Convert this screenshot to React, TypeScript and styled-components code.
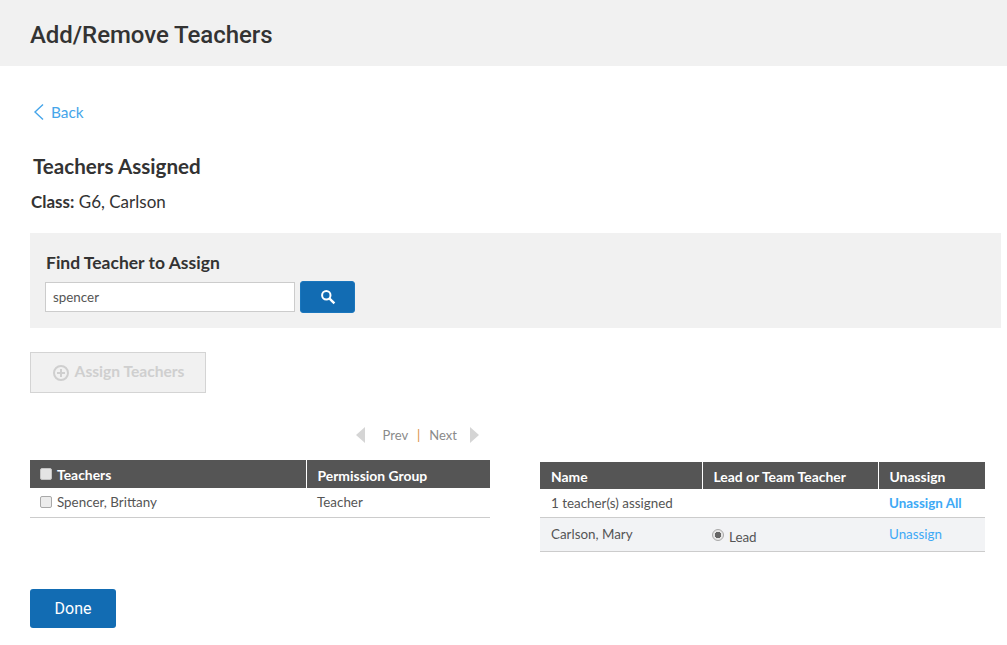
import styled, { createGlobalStyle } from 'styled-components'

const GlobalStyle = createGlobalStyle`
  html, body {
    margin: 0;
    padding: 0;
    background: #fff;
    font-family: "Lato", "Open Sans", Arial, sans-serif;
    color: #333;
  }
`

const PageHeader = styled.header`
  height: 66px;
  background: #f1f1f1;
  padding: 4px 0 0 30px;
  box-sizing: border-box;
  display: flex;
  align-items: center;
`

const PageTitle = styled.h1`
  margin: 0;
  font-family: "Roboto", Arial, sans-serif;
  font-weight: 500;
  font-size: 24px;
  letter-spacing: -0.05px;
  color: #333;
`

const Main = styled.main`
  padding: 34px 6px 0 30px;
`

const BackLink = styled.a`
  display: flex;
  align-items: center;
  gap: 6px;
  height: 24px;
  padding-left: 3px;
  font-size: 15.4px;
  color: #45a5ea;
`

const SectionTitle = styled.h2`
  margin: 29px 0 0 3px;
  font-size: 20.6px;
  line-height: 26px;
  font-weight: 700;
  color: #333;
`

const ClassLine = styled.p`
  margin: 12px 0 0 1px;
  font-size: 17px;
  line-height: 22px;
  color: #333;

  b {
    font-weight: 700;
  }
`

const SearchPanel = styled.section`
  margin-top: 20px;
  height: 95px;
  box-sizing: border-box;
  padding: 19px 16px 0 15px;
  background: #f1f1f1;
`

const SearchLabel = styled.div`
  font-size: 17.5px;
  line-height: 22px;
  font-weight: 700;
  padding-left: 1px;
  color: #333;
`

const SearchRow = styled.div`
  display: flex;
  align-items: center;
  gap: 5px;
  margin-top: 7px;
`

const SearchInput = styled.input`
  width: 250px;
  height: 30px;
  box-sizing: border-box;
  padding: 0 7px;
  border: 1px solid #ccc;
  background: #fff;
  font-family: inherit;
  font-size: 13.4px;
  color: #555;
  outline: none;
`

const SearchButton = styled.button`
  width: 55px;
  height: 32px;
  padding: 0;
  display: flex;
  align-items: center;
  justify-content: center;
  background: #126cb3;
  border: 1px solid #1a76bd;
  border-radius: 3px;
`

const AssignButton = styled.button`
  margin-top: 24px;
  width: 176px;
  height: 41px;
  display: flex;
  align-items: center;
  justify-content: center;
  gap: 6px;
  padding: 0 0 3px 1px;
  background: #f1f1f1;
  border: 1px solid #d4d4d4;
  font-family: inherit;
  font-size: 15.6px;
  font-weight: 700;
  color: #cfcfcf;
`

const PlusIcon = styled.svg`
  margin-top: 3px;
`

const Columns = styled.div`
  display: flex;
  margin-top: 32px;
  gap: 50px;
`

const LeftColumn = styled.div`
  width: 460px;
`

const RightColumn = styled.div`
  width: 445px;
  margin-top: 37px;
`

const Pager = styled.nav`
  height: 20px;
  display: flex;
  align-items: center;
  justify-content: flex-end;
  padding-right: 11px;
  margin-bottom: 15px;
  font-size: 13px;
  color: #8a8a8a;
`

const PagerPrev = styled.span`
  margin: 0 9px 0 18px;
`

const PagerNext = styled.span`
  margin: 0 13px 0 9px;
`

const PagerDivider = styled.span`
  color: #d98e3f;
`

const Arrow = styled.span<{ $dir: 'left' | 'right' }>`
  width: 0;
  height: 0;
  border-top: 8px solid transparent;
  border-bottom: 8px solid transparent;
  ${p => (p.$dir === 'left' ? 'border-right: 9px solid #d5d5d5;' : 'border-left: 9px solid #d5d5d5;')}
`

const Table = styled.table`
  width: 100%;
  table-layout: fixed;
  border-collapse: collapse;
  font-size: 13.4px;
  color: #555;
`

const HeadCell = styled.th<{ $width: number; $height: number }>`
  width: ${p => p.$width}px;
  height: ${p => p.$height}px;
  box-sizing: border-box;
  padding: 2px 0 0 11px;
  background: #555;
  color: #fff;
  text-align: left;
  font-size: 13.9px;
  font-weight: 700;
  border-left: 1px solid #fff;

  &:first-child {
    border-left: none;
  }
`

const Row = styled.tr<{ $shaded?: boolean }>`
  border-bottom: 1px solid #ccc;
  background: ${p => (p.$shaded ? '#f2f3f5' : '#fff')};
`

const Cell = styled.td<{ $height: number }>`
  height: ${p => p.$height}px;
  box-sizing: border-box;
  padding: 0 0 0 11px;
`

const NameWrap = styled.span<{ $head?: boolean }>`
  display: flex;
  align-items: center;
  gap: 5px;
  margin: ${p => (p.$head ? '-2px 0 0 -1px' : '0 0 0 -1px')};
`

const CheckBox = styled.input.attrs({ type: 'checkbox' })<{ $head?: boolean }>`
  appearance: none;
  width: 12px;
  height: 12px;
  margin: 0;
  flex: none;
  border: 1px solid ${p => (p.$head ? '#c4c4c4' : '#a9a9a9')};
  border-radius: 2px;
  background: ${p => (p.$head ? '#e4e4e4' : '#ececec')};
`

const LeadWrap = styled.span`
  display: flex;
  align-items: center;
  gap: 5px;
  padding-top: 5px;
  margin-left: -1px;
`

const Radio = styled.input.attrs({ type: 'radio' })`
  appearance: none;
  width: 12px;
  height: 12px;
  margin: -4px 0 0;
  flex: none;
  border: 1px solid #a9a9a9;
  border-radius: 50%;
  background: radial-gradient(circle, #666 0 3px, #e6e6e6 3.5px);
`

const LinkText = styled.a<{ $bold?: boolean }>`
  color: #3ea9f5;
  font-weight: ${p => (p.$bold ? 700 : 400)};
`

const DoneButton = styled.button`
  display: block;
  margin-top: 37px;
  width: 86px;
  height: 39px;
  padding: 0;
  background: #126cb3;
  border: none;
  border-radius: 3px;
  color: #fff;
  font-family: "Roboto", Arial, sans-serif;
  font-size: 16px;
`

export default function App() {
  return (
    <>
      <GlobalStyle />
      <PageHeader>
        <PageTitle>Add/Remove Teachers</PageTitle>
      </PageHeader>
      <Main>
        <BackLink>
          <svg width="12" height="18" viewBox="0 0 12 18" fill="none">
            <path d="M10 1.5 2 9l8 7.5" stroke="#45a5ea" strokeWidth="1.4" />
          </svg>
          Back
        </BackLink>
        <SectionTitle>Teachers Assigned</SectionTitle>
        <ClassLine><b>Class:</b> G6, Carlson</ClassLine>
        <SearchPanel>
          <SearchLabel>Find Teacher to Assign</SearchLabel>
          <SearchRow>
            <SearchInput defaultValue="spencer" />
            <SearchButton aria-label="Search">
              <svg width="16" height="16" viewBox="0 0 16 16" fill="none">
                <circle cx="6.3" cy="6.3" r="4.2" stroke="#fff" strokeWidth="2" />
                <path d="m9.6 9.6 4.8 4.8" stroke="#fff" strokeWidth="2.4" />
              </svg>
            </SearchButton>
          </SearchRow>
        </SearchPanel>
        <AssignButton disabled>
          <PlusIcon width="16" height="16" viewBox="0 0 16 16" fill="none">
            <circle cx="8" cy="8" r="7" stroke="#cfcfcf" strokeWidth="2" />
            <path d="M8 4v8M4 8h8" stroke="#cfcfcf" strokeWidth="2" />
          </PlusIcon>
          Assign Teachers
        </AssignButton>
        <Columns>
          <LeftColumn>
            <Pager>
              <Arrow $dir="left" />
              <PagerPrev>Prev</PagerPrev>
              <PagerDivider>|</PagerDivider>
              <PagerNext>Next</PagerNext>
              <Arrow $dir="right" />
            </Pager>
            <Table>
              <thead>
                <tr>
                  <HeadCell $width={276} $height={28}>
                    <NameWrap $head><CheckBox $head readOnly />Teachers</NameWrap>
                  </HeadCell>
                  <HeadCell $width={184} $height={28}>Permission Group</HeadCell>
                </tr>
              </thead>
              <tbody>
                <Row>
                  <Cell $height={29}>
                    <NameWrap><CheckBox readOnly />Spencer, Brittany</NameWrap>
                  </Cell>
                  <Cell $height={29}>Teacher</Cell>
                </Row>
              </tbody>
            </Table>
          </LeftColumn>
          <RightColumn>
            <Table>
              <thead>
                <tr>
                  <HeadCell $width={162} $height={27}>Name</HeadCell>
                  <HeadCell $width={176} $height={27}>Lead or Team Teacher</HeadCell>
                  <HeadCell $width={107} $height={27}>Unassign</HeadCell>
                </tr>
              </thead>
              <tbody>
                <Row>
                  <Cell $height={28}>1 teacher(s) assigned</Cell>
                  <Cell $height={28} />
                  <Cell $height={28}><LinkText $bold>Unassign All</LinkText></Cell>
                </Row>
                <Row $shaded>
                  <Cell $height={34}>Carlson, Mary</Cell>
                  <Cell $height={34}>
                    <LeadWrap><Radio readOnly checked />Lead</LeadWrap>
                  </Cell>
                  <Cell $height={34}><LinkText>Unassign</LinkText></Cell>
                </Row>
              </tbody>
            </Table>
          </RightColumn>
        </Columns>
        <DoneButton>Done</DoneButton>
      </Main>
    </>
  )
}
